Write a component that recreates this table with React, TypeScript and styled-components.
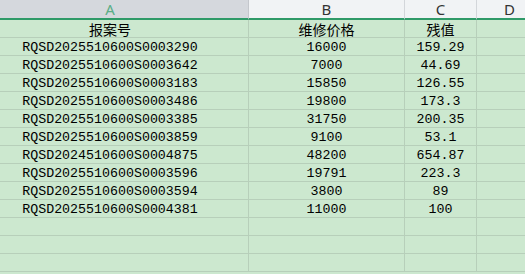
import React from "react";
import styled, { createGlobalStyle } from "styled-components";

const Global = createGlobalStyle`
  html, body { margin: 0; padding: 0; background: #cce8cf; overflow: hidden; }
  #root { width: 525px; height: 274px; overflow: hidden; }
`;

const Sheet = styled.div`
  display: grid;
  grid-template-columns: 249px 156px 72px 66px;
  width: 543px;
  background: #cce8cf;
`;

const ColHead = styled.div<{ $sel?: boolean; $padR?: number }>`
  height: 20px;
  box-sizing: border-box;
  background: ${(p) => (p.$sel ? "#d5d8dd" : "#f1f3f5")};
  border-right: 1px solid ${(p) => (p.$sel ? "#c4c7cc" : "#d3d6da")};
  border-bottom: 2px solid #2f9a68;
  color: ${(p) => (p.$sel ? "#5aae86" : "#333")};
  font-family: "Noto Sans", "Liberation Sans", sans-serif;
  font-size: 15px;
  line-height: 18px;
  display: flex;
  align-items: center;
  justify-content: center;
  padding-right: ${(p) => p.$padR ?? 0}px;
`;

const Cell = styled.div<{ $padR?: number; $cjk?: boolean }>`
  height: 18px;
  box-sizing: border-box;
  border-right: 1px solid #b7cfba;
  border-bottom: 1px solid #b7cfba;
  display: flex;
  align-items: center;
  justify-content: center;
  padding-right: ${(p) => p.$padR ?? 0}px;
  padding-top: 1px;
  color: #000;
  white-space: nowrap;
  font-family: ${(p) =>
    p.$cjk
      ? '"Noto Sans CJK SC", sans-serif'
      : '"Liberation Mono", "Noto Sans CJK SC", monospace'};
  font-size: ${(p) => (p.$cjk ? "14px" : "13.3px")};
`;

const rows: [string, string, string][] = [
  ["RQSD2025510600S0003290", "16000", "159.29"],
  ["RQSD2025510600S0003642", "7000", "44.69"],
  ["RQSD2025510600S0003183", "15850", "126.55"],
  ["RQSD2025510600S0003486", "19800", "173.3"],
  ["RQSD2025510600S0003385", "31750", "200.35"],
  ["RQSD2025510600S0003859", "9100", "53.1"],
  ["RQSD2024510600S0004875", "48200", "654.87"],
  ["RQSD2025510600S0003596", "19791", "223.3"],
  ["RQSD2025510600S0003594", "3800", "89"],
  ["RQSD2025510600S0004381", "11000", "100"],
  ["", "", ""],
  ["", "", ""],
  ["", "", ""],
];

export default function App() {
  return (
    <>
      <Global />
      <Sheet>
        <ColHead $sel $padR={28}>A</ColHead>
        <ColHead>B</ColHead>
        <ColHead>C</ColHead>
        <ColHead>D</ColHead>
        <Cell $cjk $padR={28}>报案号</Cell>
        <Cell $cjk>维修价格</Cell>
        <Cell $cjk>残值</Cell>
        <Cell />
        {rows.map((r, i) => (
          <React.Fragment key={i}>
            <Cell $padR={28}>{r[0]}</Cell>
            <Cell>{r[1]}</Cell>
            <Cell>{r[2]}</Cell>
            <Cell />
          </React.Fragment>
        ))}
      </Sheet>
    </>
  );
}
